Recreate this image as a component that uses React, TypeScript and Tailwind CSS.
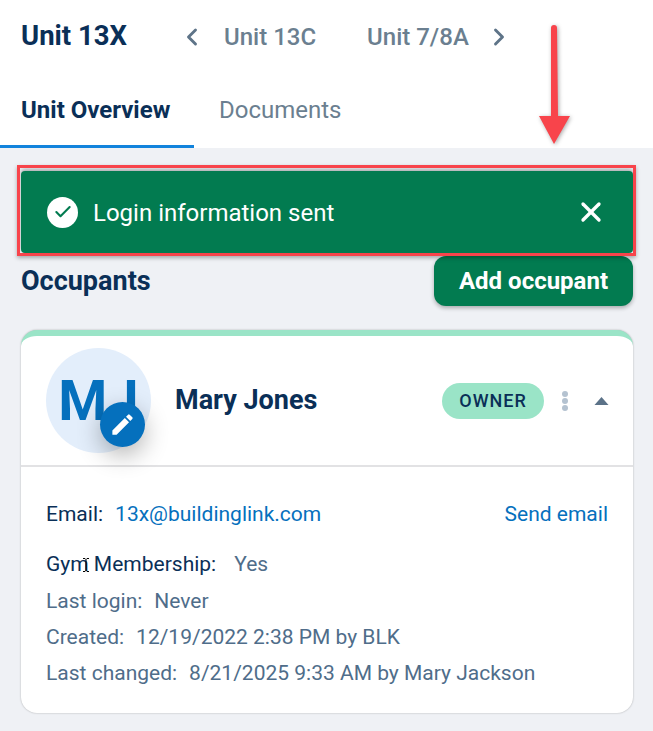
import { Check, ChevronLeft, ChevronRight, X } from 'lucide-react';

const navy = 'text-[#0a2f57]';

function InfoLine({ label, value }: { label: string; value: string }) {
  return (
    <div className="h-9 flex items-center text-[#4f6d8a]">
      <span>{label}</span>
      <span className="ml-[12px]">{value}</span>
    </div>
  );
}

export default function App() {
  return (
    <div className="relative w-[653px] h-[731px] overflow-hidden bg-[#eff1f5] font-['Roboto',sans-serif] text-[21px]">
      <header className="bg-white h-[148px]">
        <div className="h-[72px] pl-[21px] flex items-center">
          <h1 className={`text-[27.5px] font-bold ${navy} w-[157px]`}>Unit 13X</h1>
          <ChevronLeft className="w-7 h-7 text-[#5e7488] mt-[1px]" strokeWidth={2.5} />
          <span className="text-[24px] font-medium text-[#6b7f90] ml-[18px] mt-[1px]">Unit 13C</span>
          <span className="text-[24px] font-medium text-[#6b7f90] ml-[51px] mt-[1px]">Unit 7/8A</span>
          <ChevronRight className="w-7 h-7 text-[#5e7488] ml-[16px] mt-[1px]" strokeWidth={2.5} />
        </div>
        <div className="flex h-[76px]">
          <div className={`w-[194px] pl-[21px] pt-[20px] h-[76px] border-b-[3px] border-[#1183dc] text-[24px] font-bold ${navy}`}>
            Unit Overview
          </div>
          <div className="pl-[25px] pt-[20px] text-[24px] text-[#6b7f90]">Documents</div>
        </div>
      </header>

      <main className="pl-[21px] pr-[20px] pt-[23px]">
        <div className="relative h-[82px] rounded bg-[#027b50] flex items-center pl-[26px] pr-[26px] text-white text-[24px] shadow-[0_-2px_4px_rgba(0,0,0,0.3)]">
          <span className="w-[31px] h-[31px] rounded-full bg-white flex items-center justify-center">
            <Check className="w-5 h-5 text-[#027b50]" strokeWidth={2.5} />
          </span>
          <span className="ml-[15px] flex-1 mt-[1px]">Login information sent</span>
          <X className="w-8 h-8 text-white" strokeWidth={2.5} />
          <div className="absolute -left-1 -right-[3px] -top-[6px] -bottom-[3px] border-[3px] border-[#f8444b] shadow-[0_2px_4px_rgba(0,0,0,0.3)] pointer-events-none" />
        </div>

        <div className="flex items-center justify-between h-[50px] mt-[3px]">
          <h2 className={`text-[27px] font-bold ${navy}`}>Occupants</h2>
          <button className="w-[199px] h-[50px] rounded-xl bg-[#027b50] text-white text-[24px] font-bold shadow-[0_2px_4px_rgba(0,0,0,0.3)]">
            Add occupant
          </button>
        </div>

        <section className="mt-[24px] h-[383px] rounded-2xl bg-white border-t-[6px] border-[#9ae4c7] shadow-[0_0_2px_rgba(0,0,0,0.3)]">
          <div className="h-[131px] pl-[25px] pr-[24px] flex items-center border-b-2 border-[#e2e2e4]">
            <div className="relative w-[105px] h-[105px] rounded-full bg-[#e3eefb] flex items-center justify-center text-[#0570bd] text-[56px] font-bold">
              MJ
              <span className="absolute left-[54px] top-[54px] w-[45px] h-[45px] rounded-full bg-[#0570bd] flex items-center justify-center shadow-[0_8px_24px_rgba(0,0,0,0.3)]">
                <svg viewBox="0 0 24 24" className="w-[27px] h-[27px] fill-white">
                  <path d="M3 17.25V21h3.75L17.81 9.94l-3.75-3.75L3 17.25zM20.71 7.04a1 1 0 0 0 0-1.41l-2.34-2.34a1 1 0 0 0-1.41 0l-1.83 1.83 3.75 3.75 1.83-1.83z" />
                </svg>
              </span>
            </div>
            <span className={`ml-[24px] text-[27px] font-bold ${navy} flex-1`}>Mary Jones</span>
            <span className={`w-[102px] h-9 rounded-full bg-[#9ae4c7] flex items-center justify-center text-[18px] font-medium tracking-[1px] ${navy}`}>
              OWNER
            </span>
            <span className="ml-[18px] w-[7px] flex flex-col gap-[1px]">
              <i className="block w-[6px] h-[6px] rounded-full bg-[#b4c2d0]" />
              <i className="block w-[6px] h-[6px] rounded-full bg-[#b4c2d0]" />
              <i className="block w-[6px] h-[6px] rounded-full bg-[#b4c2d0]" />
            </span>
            <svg viewBox="0 0 14 8" className="w-[15px] h-[8px] ml-[25px] fill-[#5b7288]">
              <path d="M7 0l7 8H0z" />
            </svg>
          </div>

          <div className="pl-[25px] pr-[25px] pt-[30px]">
            <div className="flex items-center h-9">
              <span className={navy}>Email:</span>
              <span className="ml-[12px] text-[#0570bd]">13x@buildinglink.com</span>
              <span className="ml-auto text-[#0570bd]">Send email</span>
            </div>
            <div className="relative flex items-center h-9 mt-[14px]">
              <span className={navy}>Gym Membership:</span>
              <span className="ml-[18px] text-[#4f6d8a]">Yes</span>
              <svg viewBox="0 0 8 14" className="absolute left-[36px] top-[11px] w-2 h-[14px] stroke-black fill-none">
                <path d="M1 .5h2l1 1 1-1h2M4 1.5v11M1 13.5h2l1-1 1 1h2" />
              </svg>
            </div>
            <div className="mt-[1px]">
              <InfoLine label="Last login:" value="Never" />
              <InfoLine label="Created:" value="12/19/2022 2:38 PM by BLK" />
              <InfoLine label="Last changed:" value="8/21/2025 9:33 AM by Mary Jackson" />
            </div>
          </div>
        </section>
      </main>

      <svg viewBox="0 0 34 124" className="absolute left-[537px] top-[24px] w-[34px] h-[124px] drop-shadow-[1px_1px_2px_rgba(0,0,0,0.35)]">
        <path d="M14 4a3 3 0 0 1 6 0l1 88h12l-16 28L2 92h12z" fill="#f8444b" />
      </svg>
    </div>
  );
}
